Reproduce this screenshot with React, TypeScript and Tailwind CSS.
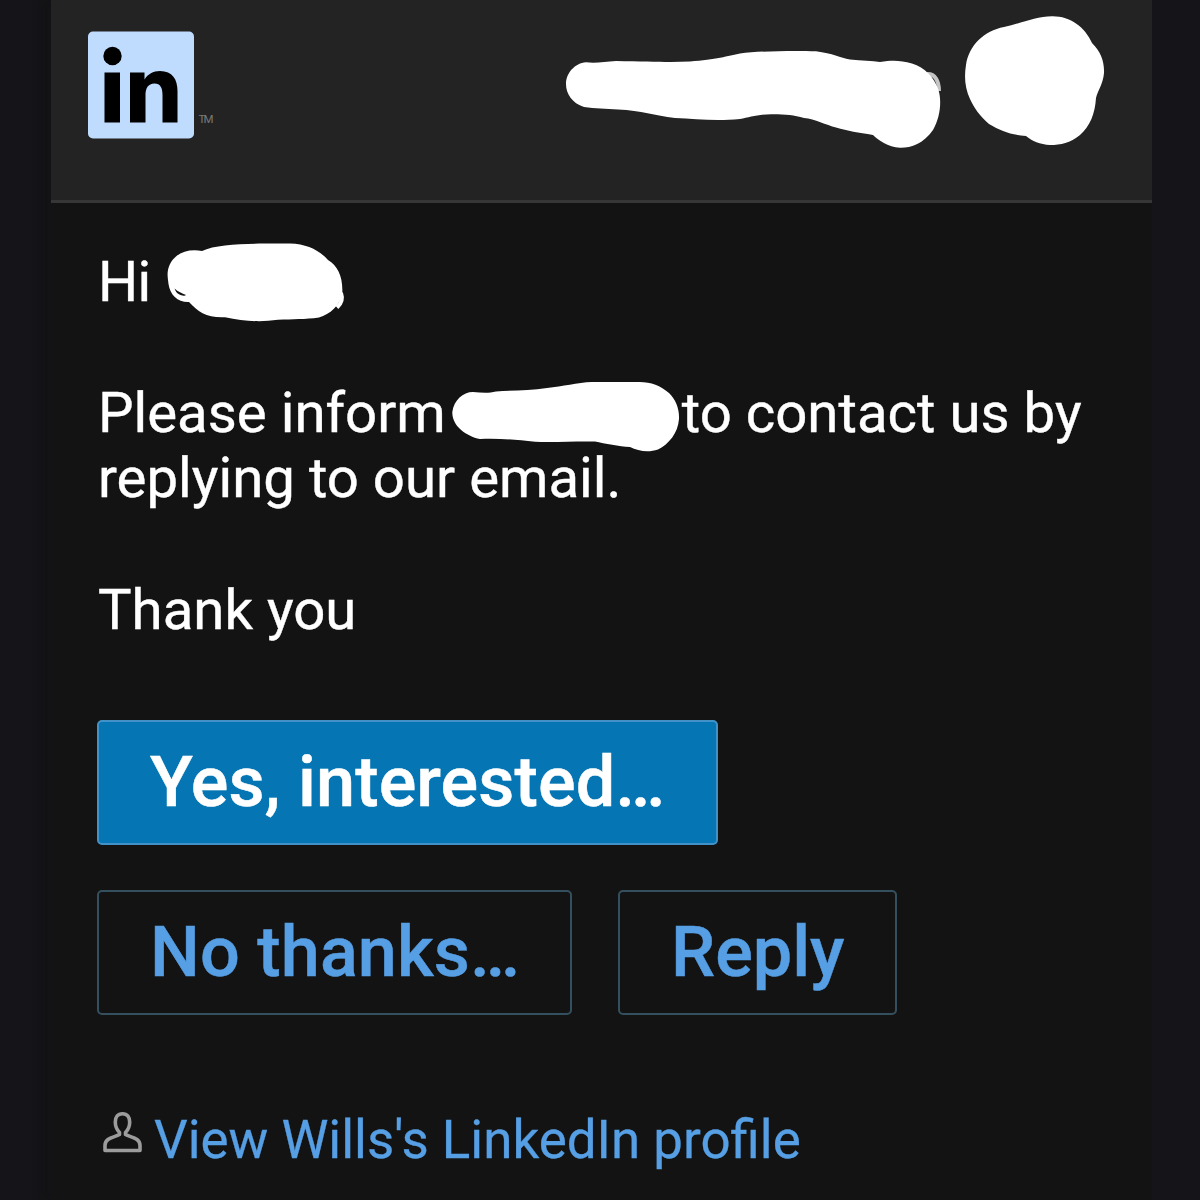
import React from "react";

function LinkedInLogo() {
  return (
    <svg className="block h-[112px] w-[134px] shrink-0" viewBox="84 29 134 112" role="img" aria-label="LinkedIn">
      <rect x="88" y="31.5" width="106" height="107" rx="5" fill="#bfdcff" />
      <circle cx="112.5" cy="56" r="9.2" fill="#000" />
      <rect x="104.5" y="72.5" width="15.5" height="50" fill="#000" />
      <path d="M130 72.500H144.500V79.500C148 74 153 71 160 71C172.500 71 177.500 79.500 177.500 91V122.500H162.500V95C162.500 88 160.500 83.500 154.500 83.500C148 83.500 145.500 88.500 145.500 95V122.500H130Z" fill="#000" />
      <text x="198.500" y="122.500" fill="#77797b" fontFamily="Roboto, sans-serif" fontSize="11.500" textLength="15">TM</text>
    </svg>
  );
}

function NameScribble() {
  return (
    <svg className="block h-[100px] w-[380px]" viewBox="563 49 380 100" aria-hidden="true">
      <path d="M927 74C935 73.500 939 81 939 91" fill="none" stroke="#c4c4c4" strokeWidth="4" />
      <path d="M586 62.200C596 63.500 605 61.500 616 61C650 61.500 670 62.500 690 61.500C716 59.500 728 56 740 53.500C760 51 792 50.500 816 51.200C833 53.500 840 57.500 850 59.500C862 60.500 872 61 880 62C892 60 900 60 912 63.500C925 67.500 934 77 938.500 90C942 102 940 118 933 130C923 144 911 148 900 147.800C888 147 878 140 873 135C858 132.500 848 131 836 127.500C826 125 815 119 804 118C794 115 786 114.500 773 114.300C758 114 750 117.500 740 119C716 121.500 696 119 675 118C654 115.500 642 110.500 618 109.500C606 108.500 595 108.500 584 107C572 103 566 94 566 84C566 73 575 63 586 62.200Z" fill="#fff" />
    </svg>
  );
}

function AvatarScribble() {
  return (
    <svg className="block h-[132px] w-[142px]" viewBox="964 15 142 132" aria-hidden="true">
      <path d="M1004 27C1022 23 1036 16.500 1052 16.300C1070 16 1085 27 1092 43C1101 52 1104.500 62 1104 73C1103 84 1098 90 1096 98C1095 114 1090 126 1080 135C1070 143 1061 145 1050 145C1040 144.500 1032 141 1026 136C1011 135 1001 131 989 124C980 116 974 108 970 99C965 88 964 77 966 65C969 45 984 31 1004 27Z" fill="#fff" />
    </svg>
  );
}

function GreetingScribble() {
  return (
    <svg className="absolute left-[68px] top-[-9px] h-[82px] w-[182px]" viewBox="165 240 182 82" aria-hidden="true">
      <path d="M341 292C343.500 299 341 303 337 306.500" fill="none" stroke="#fff" strokeWidth="4" />
      <path d="M202 250C215 243.500 240 242.800 265 242.500H290C307 243 319 249 328 259C338 265 343 276 342.300 292C340 305 330 313 319 316.500C305 318.500 293 318 278 318.800C259 321.500 243 320 225 316.200C207 317 198 311 189 301C178 301.500 170 294 168.500 283C168 278 167 274 168 269C171 255 184 247 202 250Z" fill="#fff" />
      <path d="M174.500 287.500C178 291 182 292 186 294C184.500 295.500 177 295 174.500 287.500Z" fill="#131313" />
    </svg>
  );
}

function ContactScribble() {
  return (
    <svg className="absolute left-[353px] top-[-2px] h-[74px] w-[230px]" viewBox="451 378 230 74" aria-hidden="true">
      <path d="M473 391C481 391.500 488 392.500 496 390.500C513 389 530 390 547 387C563 385.500 577 381.500 592 381H637C650 380.500 660 384 669 392C676 399 679.500 408 679 418C678 432 669 443 658 448.500C648 452 638 450 630 446C619 445.500 605 442.500 595 440.500C575 440 557 441.500 535 440.800C516 439 500 437 480 438C466 435 452 425 452.300 411C454 399 463 391 473 391Z" fill="#fff" />
    </svg>
  );
}

function PersonIcon() {
  return (
    <svg className="mt-[-16px] block h-[42px] w-[40px] shrink-0" viewBox="0 0 40 42" fill="none" stroke="#9c9c9c" strokeWidth="3.600" strokeLinejoin="round" aria-hidden="true">
      <path d="M20.500 2.800C15.500 2.800 13.300 6.500 13.300 11C13.300 16 15 19 17.500 21.500V23.500C12.500 26.500 3 26.500 3 34.500V39.500H38V34.500C38 26.500 28.500 26.500 23.500 23.500V21.500C26 19 27.700 16 27.700 11C27.700 6.500 25.500 2.800 20.500 2.800Z" />
    </svg>
  );
}

export default function App() {
  return (
    <div className="h-[1200px] w-[1200px] overflow-hidden bg-[#141419] pl-[51px] pr-12 font-['Roboto',sans-serif]">
      <div className="flex h-full flex-col bg-[#131313] shadow-[-10px_0_6px_#131315]">
        <header className="flex h-[203px] shrink-0 items-start border-b-[3px] border-[#363636] bg-[#232323] pl-[33px] pr-[46px]">
          <div className="pt-[29px]">
            <LinkedInLogo />
          </div>
          <div className="ml-auto flex items-start gap-[21px]">
            <div className="pt-[49px]">
              <NameScribble />
            </div>
            <div className="pt-[15px]">
              <AvatarScribble />
            </div>
          </div>
        </header>
        <main className="flex flex-col items-start pl-[47px] pr-12 pt-[46.6px]">
          <div className="whitespace-nowrap text-[56.35px] leading-[65.6px] text-white [-webkit-text-stroke:0.4px]">
            <p className="relative -ml-px pl-px tracking-[-0.8px]">
              Hi
              <GreetingScribble />
            </p>
            <p className="relative mt-[65.6px]">
              Please inform
              <ContactScribble />
              <span className="ml-[236px]">to contact us by</span>
              <br />
              replying to our email.
            </p>
            <p className="mt-[65.6px]">Thank you</p>
          </div>
          <div className="-ml-px mt-[76.4px] flex w-full flex-wrap gap-x-[46px] gap-y-[45px] text-[70.2px] font-medium leading-none [-webkit-text-stroke:0.5px]">
            <button className="mr-[180px] h-[125px] w-[621px] rounded-[5px] border-2 border-[#4292c8] bg-[#0575b3] pl-[51px] pt-px text-left tracking-[0.1px] text-white">
              Yes, interested…
            </button>
            <button className="h-[125px] w-[475px] rounded-[5px] border-2 border-[#34505f] pl-[51px] pt-px text-left tracking-[0.1px] text-[#569fe5]">
              No thanks…
            </button>
            <button className="h-[125px] w-[279px] rounded-[5px] border-2 border-[#34505f] pl-[51px] pt-px text-left text-[#569fe5]">
              Reply
            </button>
          </div>
          <a className="ml-[4px] mt-[93px] flex items-center gap-[12px] whitespace-nowrap text-[52.9px] leading-[64px] text-[#569fe5] [-webkit-text-stroke:0.3px]">
            <PersonIcon />
            View Wills's LinkedIn profile
          </a>
        </main>
      </div>
    </div>
  );
}
